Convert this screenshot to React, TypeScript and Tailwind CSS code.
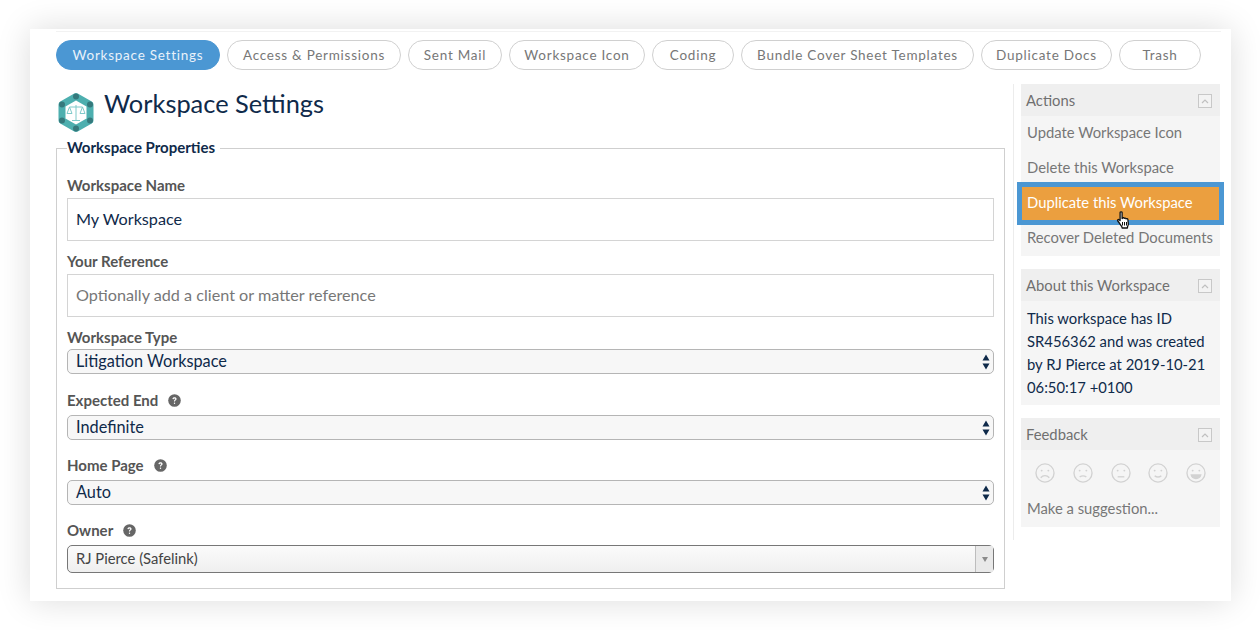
import React from "react";

const font = { fontFamily: 'Lato, "Noto Sans", sans-serif' };

const tabs: [string, string][] = [
  ["Workspace Settings", "w-[164px]"],
  ["Access & Permissions", "w-[174px]"],
  ["Sent Mail", "w-[94px]"],
  ["Workspace Icon", "w-[136px]"],
  ["Coding", "w-[82px]"],
  ["Bundle Cover Sheet Templates", "w-[233px]"],
  ["Duplicate Docs", "w-[131px]"],
  ["Trash", "w-[82px]"],
];

function Help() {
  return (
    <svg width="13" height="13" viewBox="0 0 13 13" className="ml-[10px]">
      <circle cx="6.5" cy="6.5" r="6.3" fill="#666" />
      <path d="M4.4 5.1c.1-1.2 1-1.8 2.1-1.8s2.1.6 2.1 1.7c0 1.4-1.600 1.400-1.600 2.500H5.900c0-1.700 1.400-1.600 1.400-2.400 0-.4-.3-.7-.8-.7s-.8.3-.9.8z" fill="#fff" />
      <rect x="5.9" y="8.600" width="1.200" height="1.300" fill="#fff" />
    </svg>
  );
}

function Arrows() {
  return (
    <svg width="8" height="16" viewBox="0 0 8 16" className="shrink-0">
      <path d="M4 0.5 L7.5 6.5 H0.5Z M4 15.5 L7.5 9.5 H0.5Z" fill="#0f2a4a" />
    </svg>
  );
}

function Label({ children, help, className }: { children: React.ReactNode; help?: boolean; className: string }) {
  return (
    <div className={"flex items-center pb-[1px] text-[15px] font-bold leading-[17px] text-[#555555] " + className}>
      {children}
      {help && <Help />}
    </div>
  );
}

function NativeSelect({ value, className }: { value: string; className: string }) {
  return (
    <div className={"flex h-[25px] items-center justify-between rounded-[5px] border border-[#b5b5b5] bg-[#f7f7f7] pl-2 pr-[3px] text-[16.3px] text-[#0f2a4a] " + className}>
      <span className="pb-[1px]">{value}</span>
      <Arrows />
    </div>
  );
}

function Collapse() {
  return (
    <span className="flex h-[14px] w-[14px] items-center justify-center border border-[#c8c8c8] bg-[#f3f3f3]">
      <svg width="8" height="5" viewBox="0 0 8 5">
        <path d="M1 4 L4 1 L7 4" fill="none" stroke="#c0c0c0" strokeWidth="1.2" />
      </svg>
    </span>
  );
}

function PanelHead({ title }: { title: string }) {
  return (
    <div className="flex h-8 items-center justify-between bg-[#efefef] pl-[5px] pr-2 pt-[2px] text-[14.8px] text-[#707070]">
      <span className="pb-[1px]">{title}</span>
      <Collapse />
    </div>
  );
}

function Face({ mouth }: { mouth: React.ReactNode }) {
  return (
    <svg width="20" height="20" viewBox="0 0 21 21" fill="none" stroke="#d2d2d2" strokeWidth="1.4">
      <circle cx="10.5" cy="10.5" r="9.5" />
      <circle cx="7" cy="8" r="1" fill="#d2d2d2" stroke="none" />
      <circle cx="14" cy="8" r="1" fill="#d2d2d2" stroke="none" />
      {mouth}
    </svg>
  );
}

function Logo() {
  const nodes = [[18, 4.5], [32, 12.5], [32, 28.5], [18, 36.5], [4, 28.5], [4, 12.5]];
  return (
    <svg width="36" height="41" viewBox="0 0 36 41" className="ml-[2px] mt-2 shrink-0">
      <polygon points="18,4.500 32,12.500 32,28.500 18,36.500 4,28.500 4,12.500" fill="#fff" stroke="#4dafaf" strokeWidth="7" strokeLinejoin="round" />
      {nodes.map(([x, y]) => (
        <circle key={x + "-" + y} cx={x} cy={y} r="3" fill="#35797c" />
      ))}
      <g fill="none" stroke="#7fcaca" strokeWidth="1">
        <path d="M18 13v15M14 28.500h8M11.500 15h13" />
        <path d="M11.500 15l-2.500 6.500h5zM24.500 15l-2.500 6.500h5z" />
      </g>
    </svg>
  );
}

function Hand() {
  return (
    <svg width="15" height="19" viewBox="0 0 14 19" className="absolute left-[94px] top-[24px]">
      <path
        d="M3.600 1.600c0-1 2-1 2 0v6l.5-.6c.4-.5 1.600-.3 1.700.4.4-.5 1.600-.4 1.800.4.5-.4 1.700-.2 1.800.7l.4 4.600c.1 1-.4 1.600-.7 2.200l-.2 1.700H5.600l-.2-1.200C4.400 14.400 2.600 11.600 1.300 10c-.7-.9.4-2 1.300-1.300l1 .9z"
        fill="#fff"
        stroke="#111"
        strokeWidth="1.300"
        strokeLinejoin="round"
      />
      <path d="M6 11v3.500M8 11v3.500M10 11v3.500" stroke="#111" strokeWidth="1" />
    </svg>
  );
}

export default function App() {
  return (
    <div className="h-[630px] w-[1260px] overflow-hidden bg-white pl-[30px] pt-[29px]" style={font}>
      <div className="h-[572px] w-[1201px] bg-white pl-[26px] pr-[10px] pt-[2px] shadow-[0_0_32px_rgba(0,0,0,0.14)]">
        <div className="flex h-[39px] gap-[7px] border-t border-[#f2f2f2] pt-2">
          {tabs.map(([t, w], i) => (
            <div
              key={t}
              className={
                "flex items-center justify-center rounded-full border text-[13.5px] tracking-[0.75px] " +
                w +
                (i === 0 ? " border-[#4b97d3] bg-[#4b97d3] text-[#e9f2fa]" : " border-[#d0d0d0] bg-white text-[#777777]")
              }
            >
              {t}
            </div>
          ))}
        </div>

        <div className="mt-[14px] flex">
          <div className="w-[949px]">
            <div className="flex h-[54px] items-start">
              <Logo />
              <h1 className="ml-[10px] mt-[2px] text-[25.4px] font-normal leading-[34px] text-[#0f2a4a]">Workspace Settings</h1>
            </div>
            <fieldset className="h-[451px] border border-[#cfcfcf] px-[10px]">
              <legend className="ml-0 pb-[2px] pr-[5px] text-[15px] font-bold leading-[18px] text-[#0f2a4a]">Workspace Properties</legend>
              <Label className="mt-[19px]">Workspace Name</Label>
              <div className="mt-[3px] flex h-[43px] items-center border border-[#d4d4d4] pb-[1px] pl-2 text-[16.2px] text-[#0f2a4a]">My Workspace</div>
              <Label className="mt-[12px]">Your Reference</Label>
              <div className="mt-[3px] flex h-[43px] items-center border border-[#d4d4d4] pb-[1px] pl-2 text-[16.2px] text-[#777777]">Optionally add a client or matter reference</div>
              <Label className="mt-[12px]">Workspace Type</Label>
              <NativeSelect className="mt-[2px]" value="Litigation Workspace" />
              <Label className="mt-[18px]" help>Expected End</Label>
              <NativeSelect className="mt-[5px]" value="Indefinite" />
              <Label className="mt-[17px]" help>Home Page</Label>
              <NativeSelect className="mt-[5px]" value="Auto" />
              <Label className="mt-[17px]" help>Owner</Label>
              <div className="mt-[5px] flex h-[28px] items-stretch rounded-[5px] border border-[#777777] bg-gradient-to-b from-[#fbfbfb] to-[#efefef] text-[14.8px] text-[#444444]">
                <span className="flex flex-1 items-center pb-[1px] pl-2">RJ Pierce (Safelink)</span>
                <span className="flex w-[18px] items-center justify-center border-l border-[#bdbdbd] bg-[#e9e9e9]">
                  <svg width="6" height="5" viewBox="0 0 6 5"><path d="M0 0H6L3 5Z" fill="#8a8a8a" /></svg>
                </span>
              </div>
            </fieldset>
          </div>

          <div className="ml-[8px] h-[456px] w-[207px] border-l border-[#ececec] pl-[7px]">
            <div className="w-[199px]">
              <PanelHead title="Actions" />
              <div className="bg-[#f5f5f5] text-[14.8px] text-[#777777]">
                <div className="flex h-[35px] items-center pb-[2px] pl-[6px]">Update Workspace Icon</div>
                <div className="flex h-[35px] items-center pb-[2px] pl-[6px]">Delete this Workspace</div>
                <div className="relative mx-[1px] my-[1px] flex h-[33px] items-center bg-[#eb9f3f] pb-[2px] pl-[5px] text-white outline-[5px] outline-[#4b97d3]">
                  Duplicate this Workspace
                  <Hand />
                </div>
                <div className="flex h-[35px] items-center pb-[2px] pl-[6px]">Recover Deleted Documents</div>
              </div>
            </div>
            <div className="mt-[13px] w-[199px]">
              <PanelHead title="About this Workspace" />
              <div className="h-[104px] bg-[#f5f5f5] pl-[6px] pr-[4px] pt-[6px] text-[14.8px] leading-[23px] text-[#0f2a4a]">
                This workspace has ID SR456362 and was created by RJ Pierce at 2019-10-21 06:50:17 +0100
              </div>
            </div>
            <div className="mt-[13px] w-[199px]">
              <PanelHead title="Feedback" />
              <div className="h-[77px] bg-[#f5f5f5] pt-[13px]">
                <div className="flex justify-between px-[14px]">
                  <Face mouth={<path d="M6 15.500c2.500-3 6.500-3 9 0" />} />
                  <Face mouth={<path d="M7 14.500c2-1.200 5-1.200 7 0" />} />
                  <Face mouth={<path d="M7 14.500h7" />} />
                  <Face mouth={<path d="M7 13.500c2 1.400 5 1.400 7 0" />} />
                  <Face mouth={<path d="M5.500 12.500h10c-1 5-9 5-10 0z" fill="#d2d2d2" />} />
                </div>
                <div className="mt-[15px] pl-[6px] text-[14.8px] leading-[20px] text-[#777777]">Make a suggestion...</div>
              </div>
            </div>
          </div>
        </div>
      </div>
    </div>
  );
}
